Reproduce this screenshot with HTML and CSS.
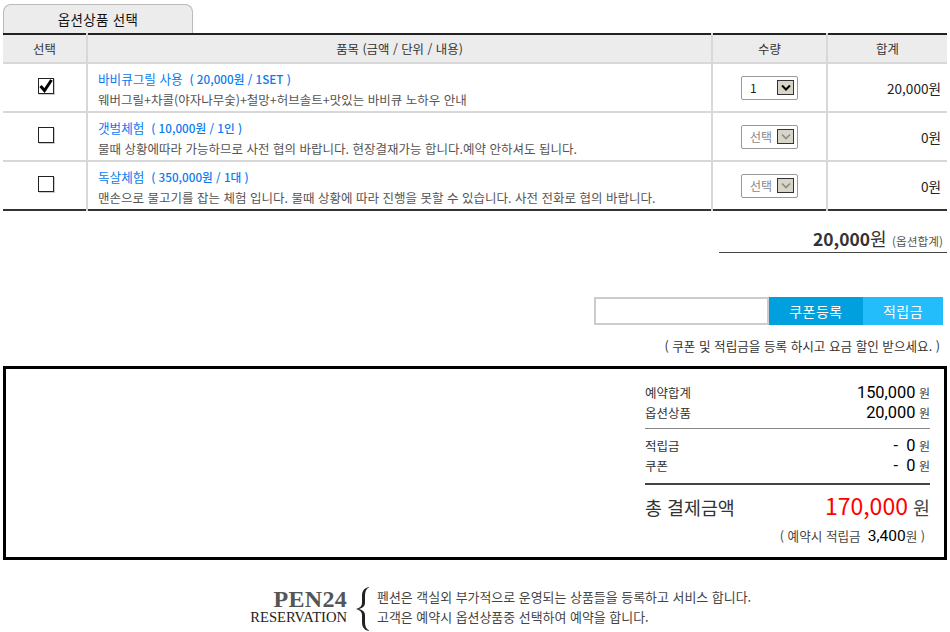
FILE: index.html
```html
<!DOCTYPE html>
<html lang="ko">
<head>
  <meta charset="UTF-8">
  <title>옵션상품 선택</title>
  <link rel="stylesheet" href="styles.css">
</head>
<body>
  <div class="container">
    <div class="tab">옵션상품 선택</div>
    <table class="options">
      <thead>
        <tr>
          <th class="col-check">선택</th>
          <th>품목 (금액 / 단위 / 내용)</th>
          <th class="col-qty">수량</th>
          <th class="col-sum">합계</th>
        </tr>
      </thead>
      <tbody>
        <tr>
          <td class="center">
            <span class="checkbox">
              <svg width="16" height="15" viewBox="0 0 16 15"><path d="M2.5 7 L6.5 11.5 L13.5 1" fill="none" stroke="#000" stroke-width="3"/></svg>
            </span>
          </td>
          <td class="item">
            <div class="item-name">바비큐그릴 사용 <b>&nbsp;( 20,000원 / 1SET )</b></div>
            <div class="item-desc">웨버그릴+차콜(야자나무숯)+철망+허브솔트+맛있는 바비큐 노하우 안내</div>
          </td>
          <td class="center">
            <div class="select"><span class="select-val">1</span><span class="select-arrow"><svg width="14" height="8" viewBox="0 0 14 8"><path d="M3 1.5 L7 5.5 L11 1.5" fill="none" stroke="#000" stroke-width="2"/></svg></span></div>
          </td>
          <td class="sum">20,000원</td>
        </tr>
        <tr>
          <td class="center"><span class="checkbox"></span></td>
          <td class="item">
            <div class="item-name">갯벌체험 <b>&nbsp;( 10,000원 / 1인 )</b></div>
            <div class="item-desc">물때 상황에따라 가능하므로 사전 협의 바랍니다. 현장결재가능 합니다.예약 안하셔도 됩니다.</div>
          </td>
          <td class="center">
            <div class="select off"><span class="select-val">선택</span><span class="select-arrow"><svg width="14" height="8" viewBox="0 0 14 8"><path d="M3 1.5 L7 5.5 L11 1.5" fill="none" stroke="#8a8a8a" stroke-width="1.6"/></svg></span></div>
          </td>
          <td class="sum">0원</td>
        </tr>
        <tr>
          <td class="center"><span class="checkbox"></span></td>
          <td class="item">
            <div class="item-name">독살체험 <b>&nbsp;( 350,000원 / 1대 )</b></div>
            <div class="item-desc">맨손으로 물고기를 잡는 체험 입니다. 물때 상황에 따라 진행을 못할 수 있습니다. 사전 전화로 협의 바랍니다.</div>
          </td>
          <td class="center">
            <div class="select off"><span class="select-val">선택</span><span class="select-arrow"><svg width="14" height="8" viewBox="0 0 14 8"><path d="M3 1.5 L7 5.5 L11 1.5" fill="none" stroke="#8a8a8a" stroke-width="1.6"/></svg></span></div>
          </td>
          <td class="sum">0원</td>
        </tr>
      </tbody>
    </table>

    <div class="option-total"><strong>20,000</strong><span class="won">원</span> <small>(옵션합계)</small></div>

    <div class="coupon">
      <input class="coupon-input" type="text">
      <button class="btn-coupon">쿠폰등록</button>
      <button class="btn-point">적립금</button>
    </div>
    <p class="coupon-note">( 쿠폰 및 적립금을 등록 하시고 요금 할인 받으세요. )</p>

    <div class="summary">
      <div class="summary-inner">
        <div class="line"><span>예약합계</span><span><b>150,000</b> <i>원</i></span></div>
        <div class="line"><span>옵션상품</span><span><b>20,000</b> <i>원</i></span></div>
        <div class="group">
          <div class="line"><span>적립금</span><span><b>-&nbsp;&nbsp;0</b> <i>원</i></span></div>
          <div class="line"><span>쿠폰</span><span><b>-&nbsp;&nbsp;0</b> <i>원</i></span></div>
        </div>
        <div class="grand">
          <span>총 결제금액</span>
          <span><em>170,000</em> <i>원</i></span>
        </div>
        <div class="earn">( 예약시 적립금 &nbsp;<b>3,400</b>원 )</div>
      </div>
    </div>

    <div class="footer">
      <div class="logo">
        <div class="logo-top">PEN24</div>
        <div class="logo-sub">RESERVATION</div>
      </div>
      <svg class="brace" width="14" height="46" viewBox="0 0 14 46"><path d="M13 1 C8 2 6 5 6 10 L6 17 C6 20 4 22 0 23 C4 24 6 26 6 29 L6 36 C6 41 8 44 13 45 L13 44.4 C10 43 9 40 9 36 L9 29 C9 26 7 24 3 23 C7 22 9 20 9 17 L9 10 C9 6 10 3 13 1.6 Z" fill="#222"/></svg>
      <div class="footer-text">
        펜션은 객실외 부가적으로 운영되는 상품들을 등록하고 서비스 합니다.<br>
        고객은 예약시 옵션상품중 선택하여 예약을 합니다.
      </div>
    </div>
  </div>
</body>
</html>
```

FILE: styles.css
```css
* {
  box-sizing: border-box;
}
body {
  margin: 0;
  background-color: #fff;
  font-family: "Noto Sans CJK KR", "Noto Sans", sans-serif;
  font-size: 12.5px;
  color: #333;
}
.container {
  width: 950px;
  padding: 4px 3px 0;
}
.tab {
  width: 190px;
  height: 29px;
  line-height: 29px;
  text-align: center;
  background-color: #ececec;
  border: 1px solid #bbb;
  border-bottom: 0;
  border-radius: 8px 8px 0 0;
  color: #111;
  font-size: 13.5px;
  letter-spacing: 0.3px;
}
.options {
  width: 944px;
  border-collapse: collapse;
  table-layout: fixed;
  border-top: 2px solid #222;
  border-bottom: 2px solid #333;
}
.options th {
  height: 29px;
  background-color: #ececec;
  border-left: 2px solid #d8d8d8;
  border-top: 1px solid #fff;
  border-bottom: 2px solid #d8d8d8;
  font-weight: normal;
  font-size: 12.4px;
  color: #333;
}
.options th:first-child,
.options td:first-child {
  border-left: 0;
}
.options td {
  height: 49px;
  border-left: 2px solid #d8d8d8;
  border-bottom: 2px solid #d8d8d8;
  padding: 0;
}
.options tr:last-child td {
  border-bottom: 0;
}
.col-check {
  width: 84px;
}
.col-qty {
  width: 115px;
}
.col-sum {
  width: 120px;
}
.center {
  text-align: center;
}
.checkbox {
  display: inline-flex;
  align-items: center;
  justify-content: center;
  width: 16px;
  height: 16px;
  margin: 0 0 4px 2px;
  vertical-align: middle;
  background-color: #fff;
  border: 1px solid #222;
  box-shadow: 1px 1px 0 #ccc;
}
.checkbox svg {
  flex: none;
}
.options .item {
  padding: 3px 0 0 10px;
}
.item-name {
  color: #0a7cf0;
  font-size: 12.6px;
  line-height: 21px;
}
.item-name b {
  font-size: 11.7px;
  font-weight: 500;
}
.item-desc {
  color: #555;
  font-size: 12.5px;
  line-height: 21px;
}
.select {
  display: inline-flex;
  align-items: center;
  justify-content: space-between;
  width: 57px;
  height: 24px;
  padding: 0 3px 0 8px;
  vertical-align: middle;
  background-color: #fff;
  border: 1px solid #999;
  border-radius: 2px;
  font-size: 12px;
  color: #222;
}
.select.off {
  color: #888;
}
.select-arrow {
  display: flex;
  align-items: center;
  justify-content: center;
  width: 17px;
  height: 15px;
  background-color: #d8d4c8;
  border: 1px solid #333;
}
.options .sum {
  text-align: right;
  padding-right: 6px;
  font-size: 13.6px;
  color: #222;
}
.option-total {
  width: 228px;
  height: 30px;
  margin: 12px 0 0 716px;
  padding-right: 4px;
  text-align: right;
  border-bottom: 1px solid #444;
  line-height: 30px;
  color: #333;
}
.option-total strong {
  font-size: 17.4px;
}
.option-total .won {
  font-size: 18px;
}
.option-total small {
  margin-left: 2px;
  font-size: 11.7px;
  color: #555;
}
.coupon {
  display: flex;
  justify-content: flex-end;
  margin: 44px 4px 0 0;
  height: 28px;
}
.coupon-input {
  width: 175px;
  height: 28px;
  border: 2px solid #ccc;
  background-color: #fff;
}
.coupon button {
  height: 28px;
  border: 0;
  color: #fff;
  font-family: inherit;
  font-size: 14px;
  letter-spacing: 0.5px;
  padding: 0;
}
.btn-coupon {
  width: 94px;
  background-color: #009fdd;
}
.btn-point {
  width: 80px;
  background-color: #23bdfb;
}
.coupon-note {
  margin: 12px 7px 0 0;
  text-align: right;
  font-size: 12.6px;
  line-height: 18px;
  color: #333;
}
.summary {
  display: flex;
  justify-content: flex-end;
  width: 944px;
  height: 194px;
  margin-top: 11px;
  padding: 14px 14px 0 0;
  border: 3px solid #000;
}
.summary-inner {
  width: 285px;
}
.line {
  display: flex;
  justify-content: space-between;
  align-items: baseline;
  height: 20px;
  line-height: 20px;
  color: #333;
}
.line i {
  font-size: 12px;
}
.line b {
  font-family: Roboto, sans-serif;
  font-size: 16.4px;
  font-weight: normal;
  color: #000;
}
.line i,
.grand i {
  font-style: normal;
  color: #444;
}
.group {
  margin-top: 5px;
  padding: 7px 0 7px;
  border-top: 1px solid #888;
  border-bottom: 2px solid #444;
}
.grand {
  display: flex;
  justify-content: space-between;
  align-items: baseline;
  margin-top: 4px;
  line-height: 32px;
  font-size: 18.4px;
  color: #333;
}
.grand em {
  font-style: normal;
  font-size: 23px;
  color: #f00;
}
.earn {
  margin-top: 3px;
  padding-right: 5px;
  text-align: right;
  font-size: 12.6px;
  color: #444;
}
.earn b {
  font-family: Roboto, sans-serif;
  font-size: 15.5px;
  font-weight: normal;
  color: #000;
}
.footer {
  display: flex;
  align-items: center;
  height: 50px;
  margin: 22px 0 0 246px;
}
.logo {
  width: 98px;
  text-align: right;
  font-family: "Liberation Serif", serif;
  color: #222;
}
.logo-top {
  font-size: 24px;
  letter-spacing: 0.3px;
  font-weight: bold;
  line-height: 20px;
  color: #555;
}
.logo-sub {
  font-size: 14.6px;
  line-height: 16px;
}
.brace {
  flex: none;
  align-self: flex-end;
  margin: 0 7px 0 9px;
}
.footer-text {
  font-size: 12.95px;
  line-height: 20px;
  color: #444;
}
```
